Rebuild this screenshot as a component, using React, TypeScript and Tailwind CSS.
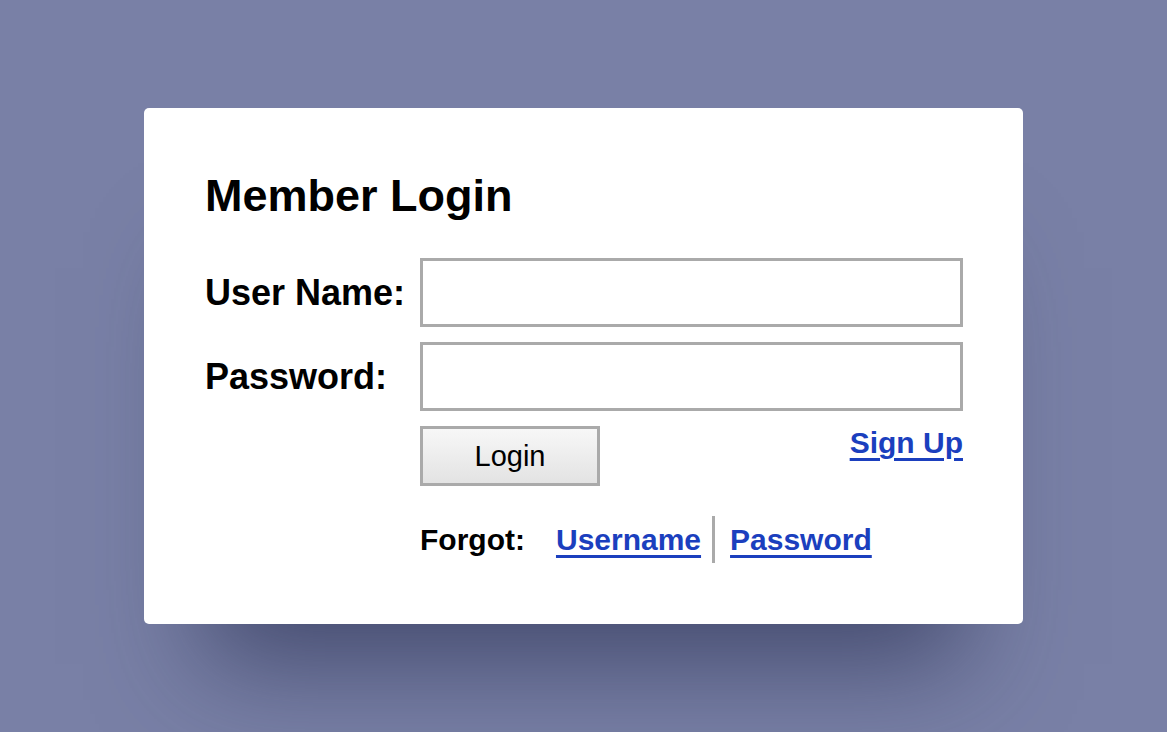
import React from "react";

export default function App() {
  return (
    <div
      className="flex h-screen w-full items-center justify-center bg-[#7980a6]"
      style={{ fontFamily: '"Liberation Sans", Arial, Helvetica, sans-serif' }}
    >
      <div className="w-[879px] rounded-[5px] bg-white pl-[61px] pt-[65px] pb-[61px] shadow-[0_100px_100px_-60px_rgba(40,46,82,0.65)]">
        <h1 className="text-[45px] font-bold leading-none text-black">Member Login</h1>

        <div className="mt-[40px] flex items-center">
          <label className="w-[215px] text-[36px] font-bold leading-none text-black">User Name:</label>
          <input
            type="text"
            className="h-[69px] w-[543px] border-[3px] border-[#aaaaaa] bg-white outline-none"
          />
        </div>

        <div className="mt-[15px] flex items-center">
          <label className="w-[215px] text-[36px] font-bold leading-none text-black">Password:</label>
          <input
            type="password"
            className="h-[69px] w-[543px] border-[3px] border-[#aaaaaa] bg-white outline-none"
          />
        </div>

        <div className="ml-[215px] mt-[15px] flex w-[543px] items-start justify-between">
          <button className="flex h-[60px] w-[180px] items-center justify-center border-[3px] border-[#aaaaaa] bg-gradient-to-b from-[#f7f7f7] to-[#e3e3e3] text-[29px] leading-none text-black">
            Login
          </button>
          <a
            href="#"
            className="mt-[2px] text-[30px] font-bold leading-none text-[#1b3fbe] underline decoration-[3px] underline-offset-[5px]"
          >
            Sign Up
          </a>
        </div>

        <div className="ml-[215px] mt-[30px] flex items-center">
          <span className="text-[30px] font-bold leading-none text-black">Forgot:</span>
          <a
            href="#"
            className="ml-[31px] text-[30px] font-bold leading-none text-[#1b3fbe] underline decoration-[3px] underline-offset-[5px]"
          >
            Username
          </a>
          <span className="ml-[11px] h-[47px] w-[3px] bg-[#aaaaaa]" />
          <a
            href="#"
            className="ml-[15px] text-[30px] font-bold leading-none text-[#1b3fbe] underline decoration-[3px] underline-offset-[5px]"
          >
            Password
          </a>
        </div>
      </div>
    </div>
  );
}
